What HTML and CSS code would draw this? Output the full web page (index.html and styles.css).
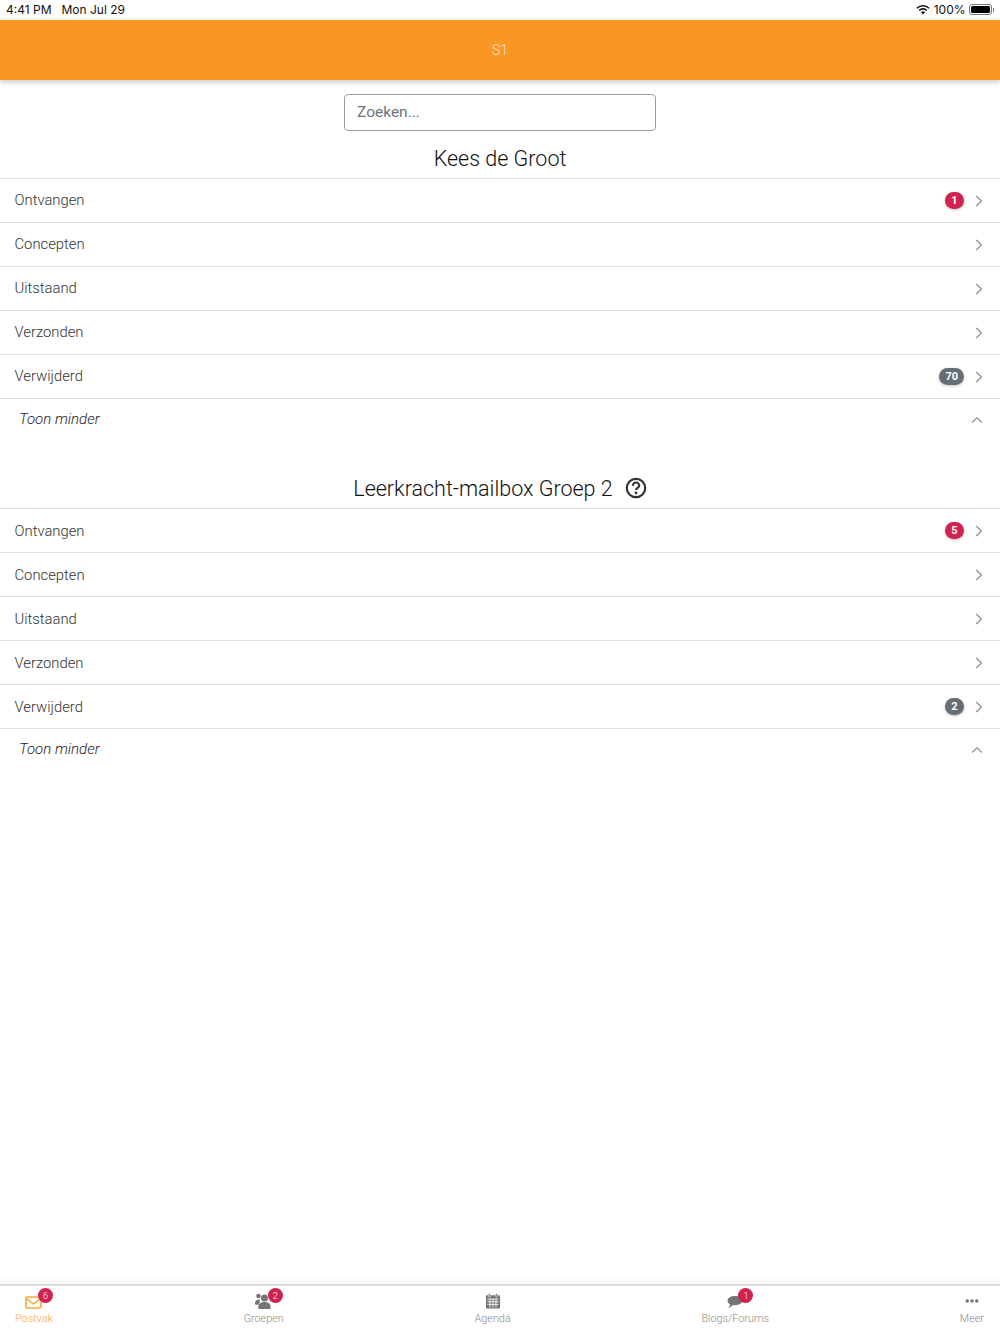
FILE: index.html
```html
<!DOCTYPE html>
<html lang="en">
<head>
    <meta charset="UTF-8">
    <meta name="viewport" content="width=device-width, initial-scale=1.0">
    <title>S1</title>
    <link rel="stylesheet" href="styles.css">
</head>
<body>
    <svg class="sprite" width="0" height="0">
        <symbol id="chev-right" viewBox="0 0 8 12"><path d="M1.2 1 6.4 6l-5.200 5"/></symbol>
        <symbol id="chev-up" viewBox="0 0 12 8"><path d="M1 6.500 6 1.800l5 4.700"/></symbol>
    </svg>
    <div class="app">
        <!-- Status bar -->
        <div class="status-bar">
            <div class="status-left"><span>4:41 PM</span><span>Mon Jul 29</span></div>
            <div class="status-right">
                <svg class="wifi" width="14" height="11" viewBox="0 0 16 12">
                    <path d="M8 11.600 5.600 9.100a3.400 3.400 0 0 1 4.800 0zM4.300 7.800 3 6.500a7 7 0 0 1 10 0l-1.300 1.300a5.200 5.200 0 0 0-7.400 0zM1.700 5.200.4 3.900a10.700 10.700 0 0 1 15.200 0l-1.300 1.300a8.900 8.900 0 0 0-12.600 0z" fill="#111"/>
                </svg>
                <span>100%</span>
                <span class="battery"><span class="battery-fill"></span></span>
                <span class="battery-tip"></span>
            </div>
        </div>

        <header class="top-bar">S1</header>

        <main class="content">
            <div class="search-wrap">
                <input class="search" type="text" placeholder="Zoeken...">
            </div>

            <h2 class="box-title">Kees de Groot</h2>
            <ul class="folders folders-first">
                <li class="folder"><span class="folder-name">Ontvangen</span><span class="badge badge-red">1</span><svg class="chevron"><use href="#chev-right"/></svg></li>
                <li class="folder"><span class="folder-name">Concepten</span><svg class="chevron"><use href="#chev-right"/></svg></li>
                <li class="folder"><span class="folder-name">Uitstaand</span><svg class="chevron"><use href="#chev-right"/></svg></li>
                <li class="folder"><span class="folder-name">Verzonden</span><svg class="chevron"><use href="#chev-right"/></svg></li>
                <li class="folder"><span class="folder-name">Verwijderd</span><span class="badge badge-grey">70</span><svg class="chevron"><use href="#chev-right"/></svg></li>
                <li class="folder folder-toggle"><span class="folder-name">Toon minder</span><svg class="chevron-up"><use href="#chev-up"/></svg></li>
            </ul>

            <h2 class="box-title box-title-second">Leerkracht-mailbox Groep 2
                <svg class="help" width="22" height="22" viewBox="0 0 22 22">
                    <circle cx="11" cy="11" r="9.200" fill="none" stroke="#333" stroke-width="2.200"/>
                    <path d="M7.800 8.700a3.200 3.200 0 0 1 6.400 0c0 2.100-3.200 2.100-3.200 4.300" fill="none" stroke="#333" stroke-width="2.200"/>
                    <circle cx="11" cy="16" r="1.400" fill="#333"/>
                </svg>
            </h2>
            <ul class="folders">
                <li class="folder"><span class="folder-name">Ontvangen</span><span class="badge badge-red">5</span><svg class="chevron"><use href="#chev-right"/></svg></li>
                <li class="folder"><span class="folder-name">Concepten</span><svg class="chevron"><use href="#chev-right"/></svg></li>
                <li class="folder"><span class="folder-name">Uitstaand</span><svg class="chevron"><use href="#chev-right"/></svg></li>
                <li class="folder"><span class="folder-name">Verzonden</span><svg class="chevron"><use href="#chev-right"/></svg></li>
                <li class="folder"><span class="folder-name">Verwijderd</span><span class="badge badge-grey">2</span><svg class="chevron"><use href="#chev-right"/></svg></li>
                <li class="folder folder-toggle"><span class="folder-name">Toon minder</span><svg class="chevron-up"><use href="#chev-up"/></svg></li>
            </ul>
        </main>

        <!-- Bottom tabs -->
        <nav class="tabs">
            <div class="tab tab-active">
                <svg class="tab-icon" width="17" height="13" viewBox="0 0 17 13">
                    <rect x="1" y="1" width="15" height="11" rx="1.500" fill="none" stroke="#fba63f" stroke-width="1.700"/>
                    <path d="M1.500 2.500 8.500 8l7-5.500" fill="none" stroke="#fba63f" stroke-width="1.500"/>
                </svg>
                <span class="tab-badge tab-badge-postvak">6</span>
                <span>Postvak</span>
            </div>
            <div class="tab">
                <svg class="tab-icon" width="17" height="16" viewBox="0 0 17 16">
                    <circle cx="3.500" cy="3" r="2.300" fill="#757575"/>
                    <circle cx="9.500" cy="5" r="3.500" fill="#757575"/>
                    <path d="M0 10.500C0 7.800 1.800 6.400 3.600 6.400c.4 0 .8 0 1.200.2-.4 1-.2 2 .3 2.700-.9.500-1.500 1.300-1.700 2.400H1a1 1 0 0 1-1-1zM3.400 13.500c0-3 2.500-4.600 6.100-4.600s6 1.600 6 4.600V16H3.400z" fill="#757575"/>
                </svg>
                <span class="tab-badge tab-badge-groepen">2</span>
                <span>Groepen</span>
            </div>
            <div class="tab">
                <svg class="tab-icon" width="16" height="16" viewBox="0 0 16 17">
                    <path d="M1.500 2.500h13a1 1 0 0 1 1 1v12a1 1 0 0 1-1 1h-13a1 1 0 0 1-1-1v-12a1 1 0 0 1 1-1z" fill="#757575"/>
                    <path d="M2 6.500h12M2 9.300h12M2 12.100h12M4.800 6v9.500M8 6v9.500M11.200 6v9.500" stroke="#fff" stroke-width=".9"/>
                    <rect x="3.400" y=".5" width="1.800" height="4" rx=".9" fill="#757575" stroke="#fff" stroke-width=".6"/>
                    <rect x="10.800" y=".5" width="1.800" height="4" rx=".9" fill="#757575" stroke="#fff" stroke-width=".6"/>
                </svg>
                <span>Agenda</span>
            </div>
            <div class="tab">
                <svg class="tab-icon" width="16" height="14" viewBox="0 0 17 15">
                    <path d="M8.500 1C13 1 16.500 3.200 16.500 6S13 11 8.500 11c-.8 0-1.500-.1-2.200-.2C5 12.300 3 13.500 1.300 13.700c1-.8 1.900-2 2-3.400C1.600 9.300.5 7.800.5 6 .5 3.200 4 1 8.500 1z" fill="#757575"/>
                </svg>
                <span class="tab-badge tab-badge-blogs">1</span>
                <span>Blogs/Forums</span>
            </div>
            <div class="tab">
                <svg class="tab-icon" width="14" height="16" viewBox="0 0 14 16">
                    <circle cx="2.200" cy="8" r="1.800" fill="#757575"/>
                    <circle cx="7" cy="8" r="1.800" fill="#757575"/>
                    <circle cx="11.800" cy="8" r="1.800" fill="#757575"/>
                </svg>
                <span>Meer</span>
            </div>
        </nav>
    </div>
</body>
</html>
```

FILE: styles.css
```css
* {
    box-sizing: border-box;
}
body {
    margin: 0;
    font-family: Roboto, "Liberation Sans", sans-serif;
    background-color: #fff;
    color: #212529;
}
.sprite {
    position: absolute;
}
.app {
    display: flex;
    flex-direction: column;
    height: 1334px;
    overflow: hidden;
}

/* status bar */
.status-bar {
    display: flex;
    justify-content: space-between;
    align-items: center;
    height: 20px;
    padding: 0 6px 1px;
    font-family: Inter, "Liberation Sans", sans-serif;
    font-size: 12px;
    color: #111;
}
.status-left {
    display: flex;
    gap: 10px;
}
.status-right {
    display: flex;
    align-items: center;
    gap: 4px;
}
.battery {
    display: block;
    width: 23px;
    height: 11px;
    margin-left: -1px;
    padding: 1px;
    border: 1px solid #777;
    border-radius: 3px;
}
.battery-fill {
    display: block;
    height: 100%;
    background-color: #000;
    border-radius: 1.5px;
}
.battery-tip {
    width: 1.5px;
    height: 4px;
    margin-left: -3px;
    background-color: #777;
}

/* orange header */
.top-bar {
    position: relative;
    display: flex;
    justify-content: center;
    align-items: center;
    height: 60px;
    background-color: #f99624;
    color: #ffe9d0;
    font-size: 14px;
    font-weight: 300;
    box-shadow: 0 2px 5px rgba(0, 0, 0, 0.22);
}

.content {
    flex: 1;
}
.search-wrap {
    display: flex;
    justify-content: center;
    padding-top: 14px;
}
.search {
    width: 312px;
    height: 37px;
    padding: 0 12px 1px;
    border: 1px solid #9a9a9a;
    border-radius: 4px;
    font-family: inherit;
    font-size: 15.5px;
}
.search::placeholder {
    color: #6c757d;
    opacity: 1;
}

.box-title {
    display: flex;
    justify-content: center;
    align-items: center;
    gap: 12px;
    height: 47px;
    margin: 0;
    padding-top: 7px;
    font-size: 21.5px;
    font-weight: 300;
    color: #111;
}
.box-title-second {
    height: 69px;
    padding-top: 29px;
}

.folders {
    list-style: none;
    margin: 0;
    padding: 0;
}
.folder {
    display: flex;
    align-items: center;
    height: 44px;
    padding: 0 17px 0 14.5px;
    border-top: 1px solid #dfdfdf;
    font-size: 14.8px;
    font-weight: 300;
    color: #333;
}
.folder-name {
    flex: 1;
}
.folders-first .folder-name {
    padding-bottom: 1px;
}
.folder-toggle {
    height: 41px;
    padding-left: 19px;
    font-size: 15px;
    font-style: italic;
    color: #222;
}
.badge {
    display: flex;
    justify-content: center;
    align-items: center;
    height: 17px;
    min-width: 19px;
    margin: -1px 11px 0 0;
    padding: 0 6px;
    border-radius: 9px;
    color: #fff;
    font-size: 11px;
    font-weight: 700;
    box-shadow: 0 1px 3px rgba(0, 0, 0, 0.25);
}
.badge-red {
    background-color: #d0214f;
}
.badge-grey {
    background-color: #656d75;
}
.chevron,
.chevron-up {
    fill: none;
    stroke: #8d919c;
    stroke-width: 1.3;
}
.chevron {
    width: 8px;
    height: 12px;
    margin-top: 1px;
}
.chevron-up {
    width: 12px;
    height: 8px;
    margin-top: 2px;
}

/* tab bar */
.tabs {
    position: relative;
    display: flex;
    justify-content: space-between;
    height: 50px;
    padding: 0 16px 0 15px;
    border-top: 2px solid #dcdcdc;
    box-shadow: 0 -3px 6px rgba(0, 0, 0, 0.05);
    font-size: 10.8px;
    font-weight: 300;
    color: #8a8a8a;
}
.tab {
    position: relative;
    display: flex;
    flex-direction: column;
    align-items: center;
    justify-content: flex-end;
    gap: 3px;
    padding-bottom: 9px;
}
.tab-active {
    color: #fba63f;
}
.tab-badge {
    position: absolute;
    top: 2px;
    display: flex;
    justify-content: center;
    align-items: center;
    width: 15px;
    height: 15px;
    border-radius: 50%;
    background-color: #d0214f;
    color: #fff;
    font-size: 9px;
}
.tab-badge-postvak {
    left: 23px;
}
.tab-badge-groepen {
    left: 24px;
}
.tab-badge-blogs {
    left: 37px;
}
```
